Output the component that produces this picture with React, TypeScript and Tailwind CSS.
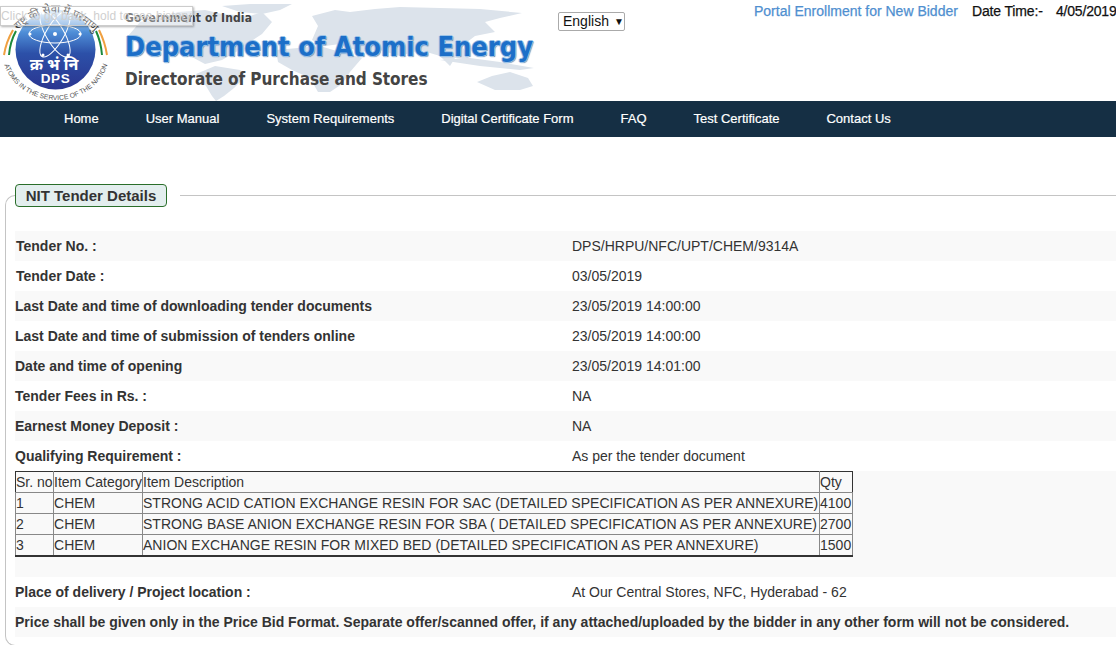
import React from "react";

const Map = () => (
  <svg className="absolute left-0 top-0" width="560" height="101" viewBox="0 0 560 101" aria-hidden="true">
    <g fill="#dce3eb">
      <path d="M128 36 L140 22 L160 18 L178 12 L205 10 L222 14 L250 16 L262 12 L272 22 L262 34 L250 42 L236 52 L222 60 L205 64 L190 56 L170 48 L150 44 Z" />
      <path d="M222 6 L250 4 L292 4 L280 10 L262 14 L240 12 Z" />
      <path d="M196 74 L215 66 L240 70 L246 76 L234 88 L224 96 L216 101 L212 96 L206 86 Z" />
      <path d="M312 16 L335 10 L350 12 L375 9 L400 7 L440 8 L480 9 L522 13 L500 18 L485 22 L495 32 L475 36 L462 46 L470 60 L455 58 L450 66 L440 56 L420 50 L400 56 L380 50 L360 52 L340 44 L325 46 L312 40 L318 26 Z" />
      <path d="M276 50 L320 46 L340 52 L362 58 L350 72 L342 84 L330 92 L318 92 L310 78 L292 70 L278 62 Z" />
      <path d="M440 60 L470 58 L500 62 L534 68 L520 70 L480 66 Z" />
      <path d="M477 82 L492 76 L510 72 L528 78 L533 86 L520 90 L495 90 Z" />
    </g>
  </svg>
);

const Logo = () => (
  <svg className="absolute left-0 top-0" width="112" height="101" viewBox="0 0 112 101">
    <defs>
      <linearGradient id="disc" x1="0" y1="0" x2="0" y2="1">
        <stop offset="0.05" stopColor="#cfe2f5" />
        <stop offset="0.28" stopColor="#4f8fd8" />
        <stop offset="0.55" stopColor="#2c50a8" />
        <stop offset="1" stopColor="#2a3590" />
      </linearGradient>
      <path id="bottomArc" d="M2 50 A 54 50 0 0 0 110 50" fill="none" />
      <path id="topArc" d="M16 32 Q 55 -8 96 34" fill="none" />
    </defs>
    <circle cx="55.5" cy="49.5" r="40" fill="url(#disc)" />
    <g fill="none" stroke="#fff" strokeWidth="1">
      <ellipse cx="55" cy="34" rx="26" ry="9" />
      <ellipse cx="55" cy="34" rx="26" ry="9" transform="rotate(60 55 34)" />
      <ellipse cx="55" cy="34" rx="26" ry="9" transform="rotate(120 55 34)" />
    </g>
    <g fill="#fff">
      <circle cx="55" cy="34" r="2" />
      <circle cx="30" cy="34" r="1.5" />
      <circle cx="80" cy="34" r="1.5" />
      <circle cx="43" cy="13" r="1.5" />
      <circle cx="68" cy="55" r="1.5" />
      <circle cx="43" cy="55" r="1.5" />
      <circle cx="68" cy="13" r="1.5" />
    </g>
    <path d="M13 30 Q 6 42 4 55" fill="none" stroke="#f0a040" strokeWidth="2" />
    <path d="M16 31 Q 10 42 9 55" fill="none" stroke="#1c8a3c" strokeWidth="2" />
    <path d="M99 30 Q 105 42 107 55" fill="none" stroke="#f0a040" strokeWidth="2" />
    <path d="M96 31 Q 101 42 102 55" fill="none" stroke="#1c8a3c" strokeWidth="2" />
    <text x="54" y="70" textAnchor="middle" fill="#fff" fontSize="16" fontWeight="700" fontFamily="'Noto Sans','Liberation Sans',sans-serif">क्र भं नि</text>
    <text x="55.5" y="83" textAnchor="middle" fill="#fff" fontSize="13.5" fontWeight="700" letterSpacing="0.6" fontFamily="'Liberation Sans',sans-serif">DPS</text>
    <text fill="#555" fontSize="6.8" fontFamily="'Liberation Sans',sans-serif">
      <textPath href="#bottomArc" startOffset="50%" textAnchor="middle">ATOMS IN THE SERVICE OF THE NATION</textPath>
    </text>
    <text fill="#444" fontSize="11" fontFamily="'Noto Sans','Liberation Sans',sans-serif">
      <textPath href="#topArc" startOffset="50%" textAnchor="middle">राष्ट्र की सेवा में परमाणु</textPath>
    </text>
  </svg>
);

const Row = ({ label, value, striped, inset }: { label: string; value: string; striped?: boolean; inset?: boolean }) => (
  <div className={`flex h-[30px] items-center ${striped ? "bg-[#f9f9f9]" : ""}`}>
    <div className={`w-[557px] shrink-0 font-bold ${inset ? "pl-px" : ""}`}>{label}</div>
    <div>{value}</div>
  </div>
);

const rows = [
  ["1", "CHEM", "STRONG ACID CATION EXCHANGE RESIN FOR SAC (DETAILED SPECIFICATION AS PER ANNEXURE)", "4100"],
  ["2", "CHEM", "STRONG BASE ANION EXCHANGE RESIN FOR SBA ( DETAILED SPECIFICATION AS PER ANNEXURE)", "2700"],
  ["3", "CHEM", "ANION EXCHANGE RESIN FOR MIXED BED (DETAILED SPECIFICATION AS PER ANNEXURE)", "1500"],
];

const nav = ["Home", "User Manual", "System Requirements", "Digital Certificate Form", "FAQ", "Test Certificate", "Contact Us"];

export default function App() {
  return (
    <div className="h-[645px] w-[1116px] overflow-hidden bg-white font-['Liberation_Sans',Arial,sans-serif] text-[14px] text-[#333]">
      <header className="relative flex h-[101px]">
        <Map />
        <Logo />
        <div className="relative ml-[125px] w-[433px] shrink-0 font-['DejaVu_Sans_Condensed','DejaVu_Sans',sans-serif] font-bold">
          <div className="mt-[11px] whitespace-nowrap text-[12px] leading-[15px] tracking-[0.1px] text-[#444]">Government of India</div>
          <div className="mt-[3px] whitespace-nowrap text-[27px] leading-[36px] text-[#1c6fc8] [text-shadow:1px_0_0_#9cc4e8,-1px_0_0_#9cc4e8,0_1px_0_#9cc4e8,0_-1px_0_#9cc4e8,1px_1px_1px_#4a76a8]">
            Department of Atomic Energy
          </div>
          <div className="mt-[4px] whitespace-nowrap text-[17px] leading-[21px] tracking-[-0.05px] text-[#444]">Directorate of Purchase and Stores</div>
        </div>
        <div className="relative mt-[12px] flex h-[19px] w-[67px] shrink-0 items-center gap-[5px] rounded-[2px] border border-[#aaa] bg-white pl-[4px] text-[#111]">
          English <span className="text-[10px] leading-none">▼</span>
        </div>
        <div className="relative ml-[129px] mt-[3px] flex h-[17px] items-center whitespace-nowrap text-[#111] [-webkit-text-stroke:0.25px]">
          <a className="w-[218px] text-[#4f8fd0]">Portal Enrollment for New Bidder</a>
          <span className="w-[84px] tracking-[-0.15px]">Date Time:-</span>
          <span className="tracking-[-0.2px]">4/05/2019</span>
        </div>
        <div className="absolute left-0 top-[6px] h-[20px] w-[193px] overflow-hidden whitespace-nowrap border border-[#ccc] bg-white/30 text-[12px] leading-[18px] tracking-[0.05px] text-[#cfcfcf] shadow-[1px_1px_2px_rgba(0,0,0,0.3)]">
          Click to go back, hold to see history
        </div>
      </header>

      <nav className="flex h-[36px] items-center gap-[47px] bg-[#152f44] pb-px pl-[64px] text-[13px] text-white [-webkit-text-stroke:0.2px]">
        {nav.map((n) => (
          <a key={n}>{n}</a>
        ))}
      </nav>

      <fieldset className="ml-[5px] mt-[47px] h-[462px] rounded-l-[10px] border border-r-0 border-[#c4c4c4] pl-[9px]">
        <legend className="pr-[13px]">
          <span className="block h-[23px] w-[152px] rounded-[4px] border border-[#2a6e2a] bg-[#e3eeee] text-center text-[15px] font-bold leading-[21px]">
            NIT Tender Details
          </span>
        </legend>
        <div className="mt-[24px]">
          <Row striped inset label="Tender No. :" value="DPS/HRPU/NFC/UPT/CHEM/9314A" />
          <Row inset label="Tender Date :" value="03/05/2019" />
          <Row striped label="Last Date and time of downloading tender documents" value="23/05/2019 14:00:00" />
          <Row label="Last Date and time of submission of tenders online" value="23/05/2019 14:00:00" />
          <Row striped label="Date and time of opening" value="23/05/2019 14:01:00" />
          <Row label="Tender Fees in Rs. :" value="NA" />
          <Row striped label="Earnest Money Deposit :" value="NA" />
          <Row label="Qualifying Requirement :" value="As per the tender document" />
          <div className="h-[106px] bg-[#f9f9f9]">
            <table className="w-[837px] table-fixed border-collapse border border-b-2 border-[#333] leading-[20px]">
              <colgroup>
                <col className="w-[38px]" />
                <col className="w-[89px]" />
                <col className="w-[677px]" />
                <col className="w-[33px]" />
              </colgroup>
              <tbody>
                <tr>
                  <td className="border border-[#888] border-l-[#333] border-t-[#333]">Sr. no</td>
                  <td className="whitespace-nowrap border border-[#888] border-t-[#333]">Item Category</td>
                  <td className="border border-[#888] border-t-[#333]">Item Description</td>
                  <td className="border border-[#888] border-r-[#333] border-t-[#333]">Qty</td>
                </tr>
                {rows.map((r) => (
                  <tr key={r[0]}>
                    {r.map((c, i) => (
                      <td key={i} className="whitespace-nowrap border border-[#888] tracking-[0.02px]">{c}</td>
                    ))}
                  </tr>
                ))}
              </tbody>
            </table>
          </div>
          <Row label="Place of delivery / Project location :" value="At Our Central Stores, NFC, Hyderabad - 62" />
          <div className="flex h-[30px] items-center bg-[#f9f9f9] font-bold">
            Price shall be given only in the Price Bid Format. Separate offer/scanned offer, if any attached/uploaded by the bidder in any other form will not be considered.
          </div>
        </div>
      </fieldset>
    </div>
  );
}
